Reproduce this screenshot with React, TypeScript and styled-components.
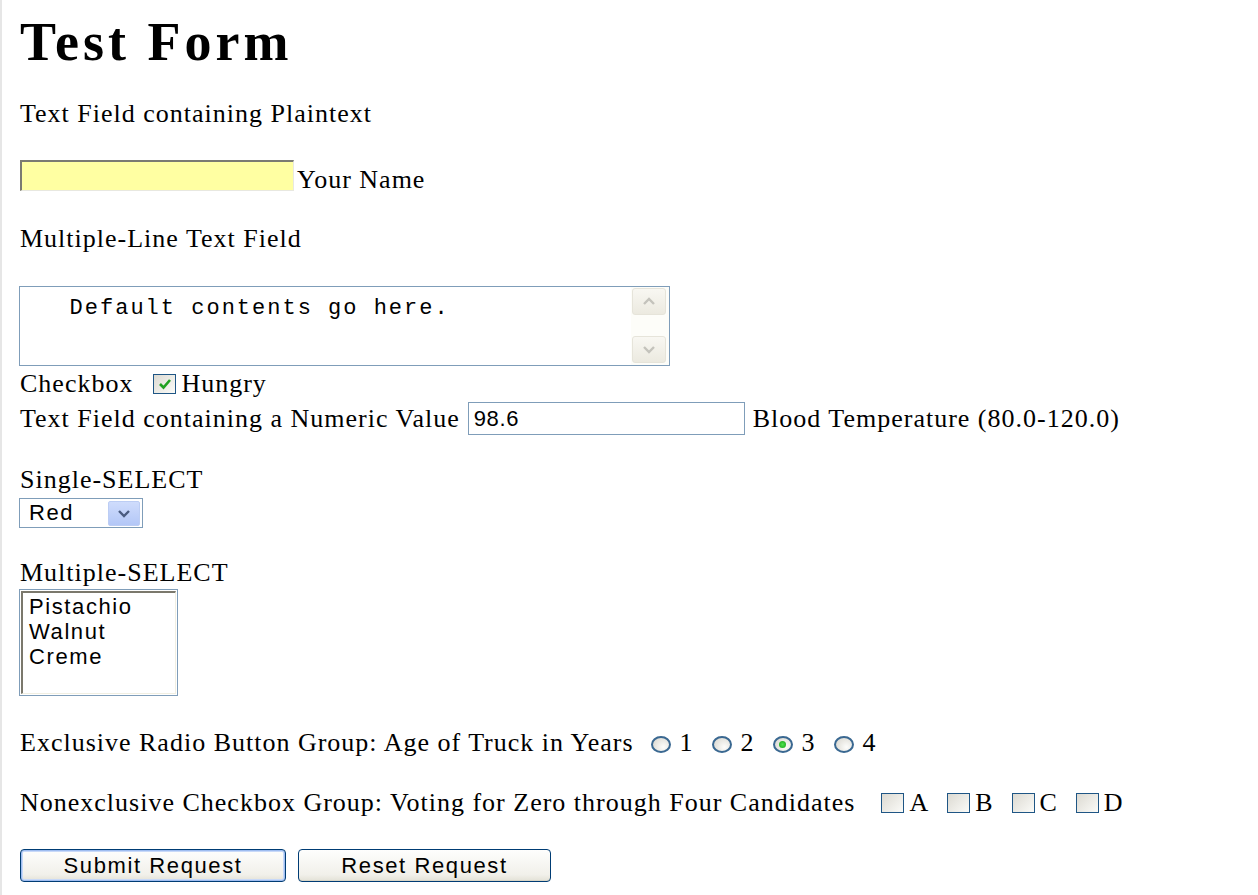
import React from 'react';
import styled, { createGlobalStyle } from 'styled-components';

const GlobalStyle = createGlobalStyle`
  html, body { margin: 0; padding: 0; background: #fff; }
  body { font-family: "Liberation Serif", "Times New Roman", serif; color: #000; }
`;

const Page = styled.div`
  width: 1258px;
  height: 895px;
  box-sizing: border-box;
  border-left: 2px solid #e6e6e6;
  padding-left: 18px;
  display: flex;
  flex-direction: column;
  align-items: flex-start;
  font-size: 26px;
  letter-spacing: 1px;
  overflow: hidden;
`;

const Title = styled.h1`
  margin: 15px 0 0;
  font-size: 54px;
  line-height: 54px;
  letter-spacing: 4px;
  font-weight: bold;
`;

const Line = styled.div<{ $mt: number }>`
  margin-top: ${(p) => p.$mt}px;
  height: 30px;
  line-height: 30px;
  white-space: nowrap;
`;

const Row = styled.div<{ $mt: number }>`
  margin-top: ${(p) => p.$mt}px;
  display: flex;
  align-items: flex-end;
  white-space: nowrap;
  line-height: 30px;
`;

const Label = styled.span<{ $drop?: number }>`
  margin-bottom: ${(p) => -(p.$drop || 0)}px;
`;

const NameInput = styled.input`
  width: 274px;
  height: 31px;
  box-sizing: border-box;
  margin: 0 3px 0 0;
  background: #ffffa2;
  border-style: solid;
  border-width: 2px 1px 1px 2px;
  border-color: #7b7b72 #e8e8e0 #e8e8e0 #7b7b72;
  outline: none;
`;

const AreaBox = styled.div`
  margin: 32px 0 0 -1px;
  width: 651px;
  height: 80px;
  box-sizing: border-box;
  border: 1px solid #7f9db9;
  display: flex;
  background: #fff;
`;

const Area = styled.textarea`
  flex: 1;
  border: none;
  outline: none;
  resize: none;
  padding: 10px 0 0 4px;
  font-family: "Liberation Mono", "Courier New", monospace;
  font-size: 22px;
  letter-spacing: 2px;
  line-height: 24px;
  color: #000;
  overflow: hidden;
`;

const ScrollBar = styled.div`
  width: 34px;
  padding: 1px 3px 2px 1px;
  background: #fdfdf9;
  display: flex;
  flex-direction: column;
  justify-content: space-between;
`;

const ScrollBtn = styled.div`
  height: 25px;
  border: 1px solid #e6e4da;
  border-radius: 3px;
  background: linear-gradient(#f8f7f2, #eceae0);
  display: flex;
  align-items: center;
  justify-content: center;
`;

const Check = styled.span<{ $ml?: number }>`
  width: 23px;
  height: 20px;
  box-sizing: border-box;
  border: 1.5px solid #1f5685;
  background: linear-gradient(135deg, #dcdad2, #fbfbf8);
  display: inline-flex;
  align-items: center;
  justify-content: center;
  margin: 0 5px 5px ${(p) => p.$ml || 0}px;
`;

const Radio = styled.span`
  width: 20px;
  height: 17px;
  box-sizing: border-box;
  border: 2px solid #3a6891;
  border-radius: 50%;
  background: radial-gradient(circle at 65% 70%, #fdfdfb, #d6d4cc);
  display: inline-flex;
  align-items: center;
  justify-content: center;
  margin: 0 9px 5px 0;
`;

const Dot = styled.span`
  width: 7px;
  height: 7px;
  border-radius: 50%;
  background: radial-gradient(circle, #4ee24e, #17a117);
`;

const Option = styled.span<{ $gap: number }>`
  display: inline-flex;
  align-items: flex-end;
  margin-left: ${(p) => p.$gap}px;
`;

const NumInput = styled.input`
  width: 277px;
  height: 33px;
  box-sizing: border-box;
  margin: 0 8px 0 8px;
  border: 1px solid #7f9db9;
  padding: 0 5px;
  font-family: "Liberation Sans", Arial, sans-serif;
  font-size: 22px;
  letter-spacing: 0.6px;
  color: #000;
  outline: none;
`;

const SelectBox = styled.div`
  margin: 3px 0 0 -1px;
  width: 124px;
  height: 30px;
  box-sizing: border-box;
  border: 1px solid #7f9db9;
  display: flex;
  align-items: center;
  justify-content: space-between;
  padding: 0 2px 0 9px;
  font-family: "Liberation Sans", Arial, sans-serif;
  font-size: 22px;
  letter-spacing: 1.6px;
`;

const DropBtn = styled.span`
  width: 32px;
  height: 25px;
  box-sizing: border-box;
  border: 1px solid #bccdf4;
  border-radius: 2px;
  background: linear-gradient(#cfdcfc, #b3c7f7);
  display: flex;
  align-items: center;
  justify-content: center;
`;

const ListBox = styled.div`
  margin: 1px 0 0 -1px;
  width: 159px;
  height: 107px;
  box-sizing: border-box;
  border: 1px solid #7f9db9;
  padding: 1px;
  display: flex;
`;

const ListInner = styled.div`
  flex: 1;
  border-style: solid;
  border-width: 2px 1px 1px 2px;
  border-color: #7b786c #f1efe2 #f1efe2 #7b786c;
  padding: 1px 0 0 6px;
  font-family: "Liberation Sans", Arial, sans-serif;
  font-size: 22px;
  letter-spacing: 1.6px;
  line-height: 25px;
`;

const Buttons = styled.div`
  margin-top: 31px;
  display: flex;
  gap: 12px;
`;

const Btn = styled.button<{ $w: number; $default?: boolean }>`
  width: ${(p) => p.$w}px;
  height: 33px;
  border: 1px solid #003c74;
  border-radius: 4px;
  background: linear-gradient(#fefefd, #f1f0ea 80%, #e3e1d6);
  box-shadow: ${(p) =>
    p.$default ? 'inset 0 0 0 1px #9fbdf0, inset 0 0 0 2px #c8d9f8' : 'inset 0 -1px 0 #d8d5c6'};
  font-family: "Liberation Sans", Arial, sans-serif;
  font-size: 22px;
  letter-spacing: 1.6px;
  color: #000;
  padding: 0;
`;

const Chevron = ({ up, color }: { up?: boolean; color: string }) => (
  <svg width="14" height="9" viewBox="0 0 14 9">
    <path
      d={up ? 'M2 7 L7 2 L12 7' : 'M2 2 L7 7 L12 2'}
      fill="none"
      stroke={color}
      strokeWidth="2.4"
    />
  </svg>
);

const Tick = () => (
  <svg width="14" height="12" viewBox="0 0 14 12">
    <path d="M2 6 L5.5 9.5 L12 2" fill="none" stroke="#21a121" strokeWidth="2.6" />
  </svg>
);

const App: React.FC = () => {
  return (
    <Page>
      <GlobalStyle />
      <Title>Test Form</Title>
      <Line $mt={30}>Text Field containing Plaintext</Line>
      <Row $mt={31}>
        <NameInput />
        <Label $drop={4}>Your Name</Label>
      </Row>
      <Line $mt={33}>Multiple-Line Text Field</Line>
      <AreaBox>
        <Area defaultValue={'   Default contents go here.'} />
        <ScrollBar>
          <ScrollBtn>
            <Chevron up color="#c4c3bc" />
          </ScrollBtn>
          <ScrollBtn>
            <Chevron color="#c4c3bc" />
          </ScrollBtn>
        </ScrollBar>
      </AreaBox>
      <Row $mt={3}>
        <span>Checkbox</span>
        <Check $ml={20}>
          <Tick />
        </Check>
        <span>Hungry</span>
      </Row>
      <Row $mt={3}>
        <Label $drop={-1}>Text Field containing a Numeric Value</Label>
        <NumInput defaultValue="98.6" />
        <Label $drop={-1}>Blood Temperature (80.0-120.0)</Label>
      </Row>
      <Line $mt={30}>Single-SELECT</Line>
      <SelectBox>
        <span>Red</span>
        <DropBtn>
          <Chevron color="#4a5c80" />
        </DropBtn>
      </SelectBox>
      <Line $mt={30}>Multiple-SELECT</Line>
      <ListBox>
        <ListInner>
          <div>Pistachio</div>
          <div>Walnut</div>
          <div>Creme</div>
        </ListInner>
      </ListBox>
      <Row $mt={32}>
        <span>Exclusive Radio Button Group: Age of Truck in Years</span>
        {['1', '2', '3', '4'].map((n) => (
          <Option key={n} $gap={n === '1' ? 17 : 18}>
            <Radio>{n === '3' && <Dot />}</Radio>
            <span>{n}</span>
          </Option>
        ))}
      </Row>
      <Row $mt={30}>
        <span>Nonexclusive Checkbox Group: Voting for Zero through Four Candidates</span>
        {['A', 'B', 'C', 'D'].map((n) => (
          <Option key={n} $gap={n === 'A' ? 26 : 18}>
            <Check />
            <span>{n}</span>
          </Option>
        ))}
      </Row>
      <Buttons>
        <Btn $w={266} $default>Submit Request</Btn>
        <Btn $w={253}>Reset Request</Btn>
      </Buttons>
    </Page>
  );
};

export default App;
